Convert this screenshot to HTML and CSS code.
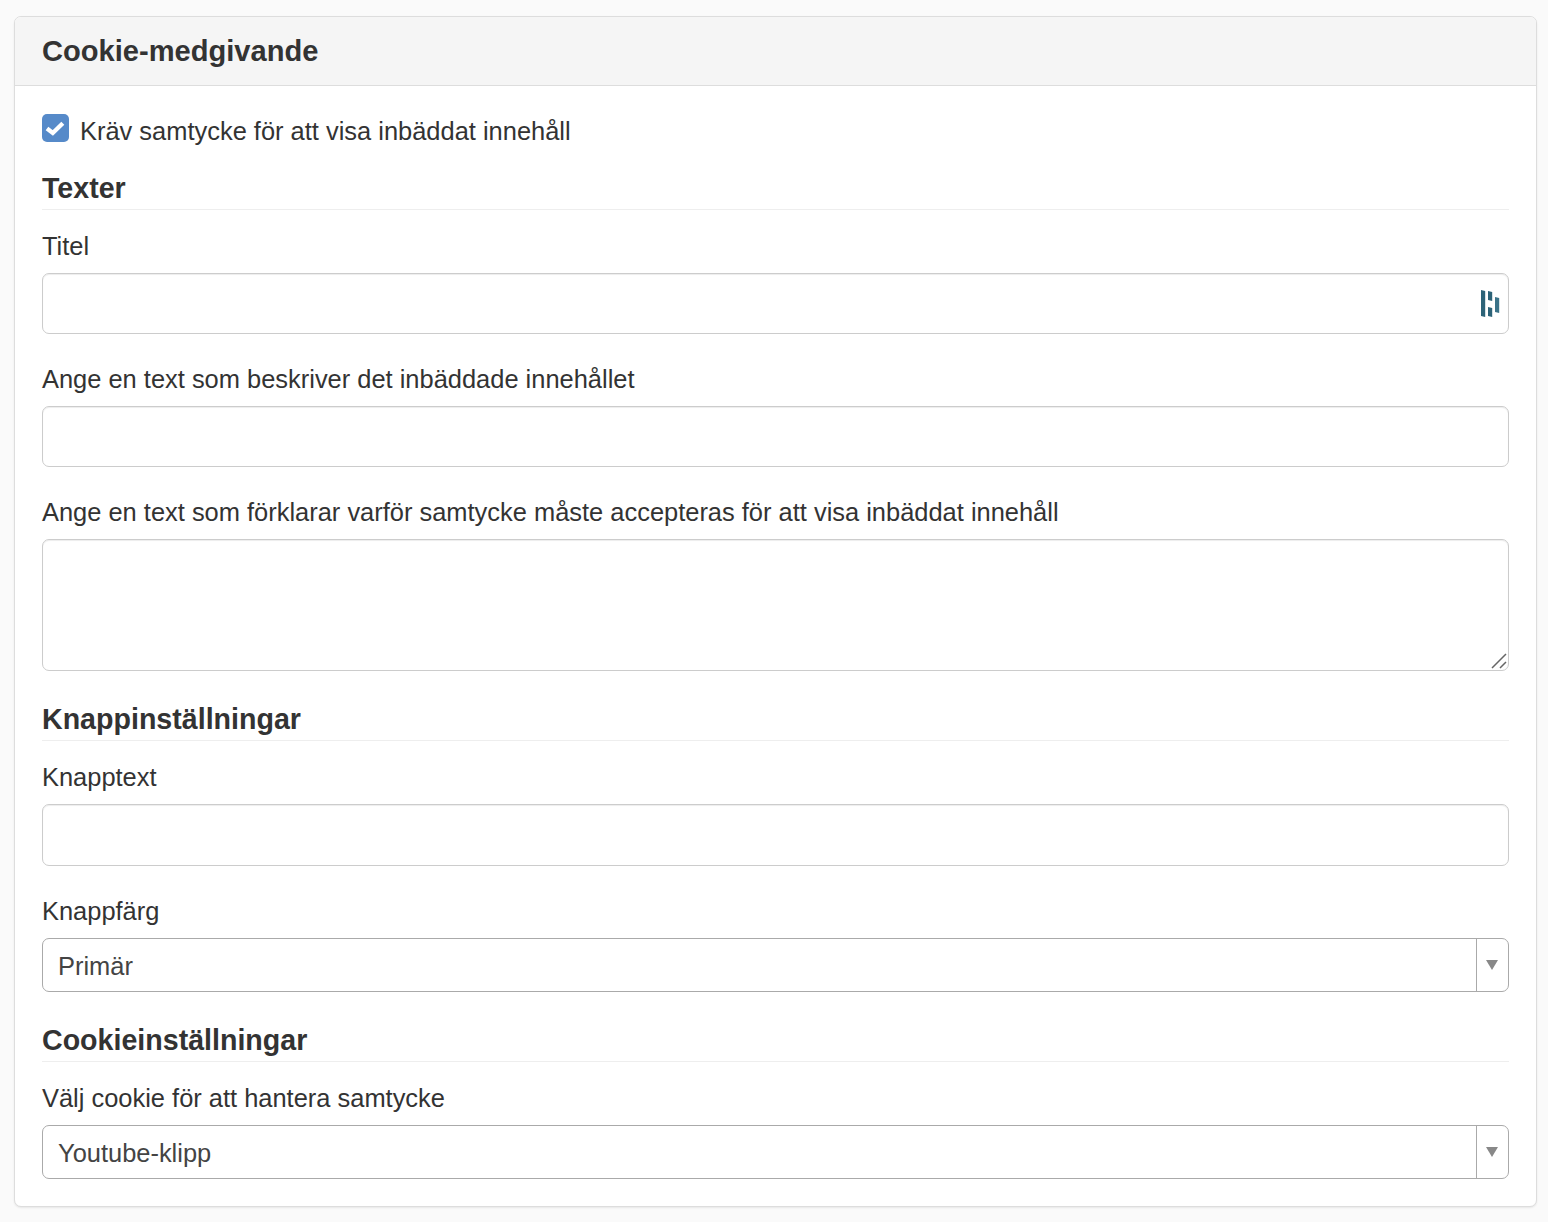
FILE: index.html
```html
<!DOCTYPE html>
<html lang="sv">
<head>
<meta charset="utf-8">
<title>Cookie-medgivande</title>
<link rel="stylesheet" href="styles.css">
</head>
<body>
<section class="panel">
  <header class="panel-head"><h2>Cookie-medgivande</h2></header>
  <div class="panel-body">
    <label class="check">
      <span class="box"><svg viewBox="0 0 27 28" width="27" height="28"><path d="M5 14.5 L10.8 19 L20.8 9.3" fill="none" stroke="#fff" stroke-width="4.3"/></svg></span>
      <span class="check-text">Kräv samtycke för att visa inbäddat innehåll</span>
    </label>
    <h3 class="legend first">Texter</h3>
    <div class="field">
      <label>Titel</label>
      <div class="input has-icon">
        <svg class="lp" viewBox="0 0 20 29" width="20" height="29"><path d="M1 1 L5.2 2 V28 L1 27 Z M8 2 L12.2 3 V12 L8 11 Z M8 18 L12.2 19 V28 L8 27 Z" fill="#2d6378"/><path d="M15 8 L19.2 9 V24 L15 23 Z" fill="#3a7288"/></svg>
      </div>
    </div>
    <div class="field">
      <label>Ange en text som beskriver det inbäddade innehållet</label>
      <div class="input"></div>
    </div>
    <div class="field">
      <label>Ange en text som förklarar varför samtycke måste accepteras för att visa inbäddat innehåll</label>
      <div class="input area">
        <svg class="grip" viewBox="0 0 16 16" width="16" height="16"><path d="M1 15 L15 1 M9 15 L15 9" stroke="#666" stroke-width="1.5" fill="none"/></svg>
      </div>
    </div>
    <h3 class="legend">Knappinställningar</h3>
    <div class="field">
      <label>Knapptext</label>
      <div class="input"></div>
    </div>
    <div class="field">
      <label>Knappfärg</label>
      <div class="select"><span class="val">Primär</span><span class="arrow"><i></i></span></div>
    </div>
    <h3 class="legend">Cookieinställningar</h3>
    <div class="field">
      <label>Välj cookie för att hantera samtycke</label>
      <div class="select"><span class="val">Youtube-klipp</span><span class="arrow"><i></i></span></div>
    </div>
  </div>
</section>
</body>
</html>
```
FILE: styles.css
```css
* { box-sizing: border-box; }
html, body { margin: 0; padding: 0; }
body {
  background: #fafafa;
  font-family: "Liberation Sans", Arial, sans-serif;
  color: #333;
  font-size: 25.45px;
  padding: 16px 11px 15px 14px;
}
.panel {
  background: #fff;
  border: 1px solid #ddd;
  border-radius: 7px;
  box-shadow: 0 1px 2px rgba(0,0,0,.08);
}
.panel-head {
  height: 69px;
  background: #f5f5f5;
  border-bottom: 1px solid #ddd;
  border-radius: 6px 6px 0 0;
  padding: 2px 27px 0;
  display: flex;
  align-items: center;
}
.panel-head h2 { margin: 0; font-size: 29.1px; font-weight: 700; line-height: 1; }
.panel-body { padding: 27px; }
.check { display: flex; align-items: center; height: 30px; gap: 11px; }
.check-text { padding-top: 6px; }
.box {
  width: 27px; height: 28px;
  background: #568ac9;
  border-radius: 5px;
  display: flex;
}
.legend {
  margin: 30.5px 0 0;
  font-size: 28.6px;
  line-height: 36px;
  height: 40px;
  font-weight: 700;
  border-bottom: 1px solid #eee;
}
.legend.first { margin-top: 26.5px; }
.field { margin-top: 30px; }
.legend + .field { margin-top: 20.9px; }
.field label { display: block; line-height: 30px; height: 30px; margin-bottom: 12.14px; }
.legend.first + .field label { padding-top: 1px; }
.input {
  position: relative;
  height: 61.36px;
  border: 1px solid #ccc;
  border-radius: 7px;
  box-shadow: inset 0 1px 1px rgba(0,0,0,.075);
  background: #fff;
}
.input.area { height: 131.36px; }
.lp { position: absolute; right: 8px; top: 15px; }
.grip { position: absolute; right: 1px; bottom: 1px; }
.select {
  display: flex;
  height: 54px;
  border: 1px solid #aaa;
  border-radius: 7px;
  background: #fff;
  color: #444;
}
.val { flex: 1; padding-left: 15px; line-height: 54px; }
.arrow {
  width: 32px;
  border-left: 1px solid #aaa;
  display: flex; align-items: center; justify-content: center;
  padding-right: 1px;
}
.arrow i {
  width: 0; height: 0;
  border-left: 6px solid transparent;
  border-right: 6px solid transparent;
  border-top: 10px solid #888;
}
```
